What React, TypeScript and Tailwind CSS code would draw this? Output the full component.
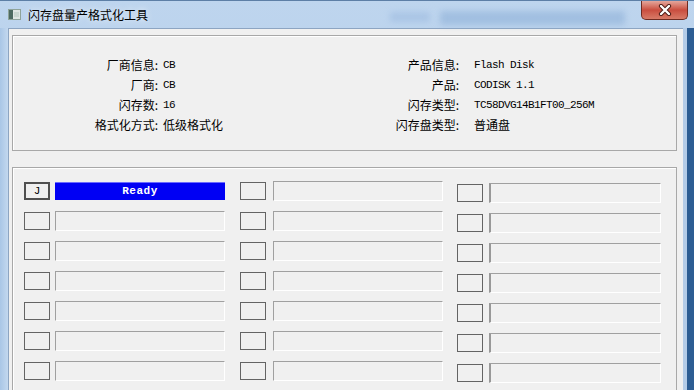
import React from "react";

const leftInfo: [string, string, boolean][] = [
  ["厂商信息:", "CB", false],
  ["厂商:", "CB", false],
  ["闪存数:", "16", false],
  ["格式化方式:", "低级格式化", true],
];
const rightInfo: [string, string, boolean][] = [
  ["产品信息:", "Flash Disk", false],
  ["产品:", "CODISK 1.1", false],
  ["闪存类型:", "TC58DVG14B1FT00_256M", false],
  ["闪存盘类型:", "普通盘", true],
];

function Value({ text, cjk }: { text: string; cjk: boolean }) {
  return cjk ? (
    <div className="h-[20px] leading-[20px] text-[12px] font-['Noto_Sans_CJK_SC',sans-serif] text-black whitespace-nowrap">
      {text}
    </div>
  ) : (
    <div className="h-[20px] leading-[20px] text-[11px] tracking-[-0.6px] font-['Liberation_Mono',monospace] text-black whitespace-nowrap">
      {text}
    </div>
  );
}

function Row({ col, idx }: { col: number; idx: number }) {
  const isReady = col === 0 && idx === 0;
  const boxW = "w-[26px]";
  return (
    <div className="flex items-center h-[20px] shrink-0">
      <div
        className={
          isReady
            ? `${boxW} h-[18px] border-2 border-[#505050] bg-[#f0f0f0] flex items-center justify-center text-[11px] font-['Liberation_Mono',monospace] text-black leading-none`
            : `${boxW} h-[18px] border border-[#646464] bg-[#f0f0f0]`
        }
      >
        {isReady ? "J" : null}
      </div>
      {isReady ? (
        <div className="ml-[5px] w-[170px] h-[18px] bg-[#0000f4] border-t border-[#6a6aff] flex items-center justify-center text-white font-bold text-[11px] tracking-[0.5px] font-['Liberation_Mono',monospace]">
          Ready
        </div>
      ) : (
        <div
          className={
            col === 2
              ? "ml-[6px] w-[172px] h-[20px] border-t border-t-[#a0a0a0] border-l-2 border-l-[#989898] border-r border-r-white border-b border-b-white bg-[#f0f0f0]"
              : col === 1
              ? "ml-[7px] w-[170px] h-[20px] border-t border-t-[#a0a0a0] border-l border-l-[#a0a0a0] border-r border-r-white border-b border-b-white bg-[#f0f0f0]"
              : "ml-[5px] w-[170px] h-[20px] border-t border-t-[#a0a0a0] border-l border-l-[#a0a0a0] border-r border-r-white border-b border-b-white bg-[#f0f0f0]"
          }
        />
      )}
    </div>
  );
}

export default function App() {
  const rows = [0, 1, 2, 3, 4, 5, 6, 7];
  return (
    <div className="w-[694px] h-[390px] overflow-hidden relative bg-gradient-to-b from-[#bed5ee] to-[#a9c6e6] flex flex-col">
      {/* title bar */}
      <div className="relative h-[28px] shrink-0 flex items-center border-t border-[#5d7fa6]">
        <div className="absolute left-[440px] top-[10px] w-[185px] h-[14px] bg-[#8fb1d8] opacity-60 blur-[3px]" />
        <div className="absolute left-[390px] top-[11px] w-[40px] h-[10px] bg-[#9dbbe0] opacity-60 blur-[3px]" />
        <svg className="ml-[8px] relative" width="13" height="11" viewBox="0 0 13 11">
          <rect x="0" y="0" width="13" height="11" fill="#8fa39a" />
          <rect x="1" y="1" width="11" height="9" fill="#dfe6e2" />
          <rect x="1" y="1" width="4" height="9" fill="#4d6a60" />
          <rect x="6" y="3" width="5" height="5" fill="#c9d6cf" />
        </svg>
        <div className="ml-[7px] relative text-[12px] leading-none text-black font-['Noto_Sans_CJK_SC',sans-serif] [text-shadow:0_0_6px_rgba(255,255,255,0.9)]">
          闪存盘量产格式化工具
        </div>
        <div className="absolute left-[641px] top-0 w-[47px] h-[19px] rounded-b-[5px] border border-t-0 border-[#6e2b22] bg-gradient-to-b from-[#e3a69c] via-[#c94d3f] to-[#d77a68] flex items-center justify-center">
          <svg width="14" height="12" viewBox="0 0 14 12">
            <path d="M3 2 L11 10 M11 2 L3 10" stroke="#4a1a14" strokeWidth="4.2" strokeLinecap="round" />
            <path d="M3 2 L11 10 M11 2 L3 10" stroke="#ffffff" strokeWidth="2.4" strokeLinecap="round" />
          </svg>
        </div>
      </div>
      {/* body */}
      <div className="flex flex-1 min-h-0">
        <div className="w-[8px] bg-gradient-to-r from-[#a9c6e6] to-[#c3d8ef]" />
        <div className="w-[675px] bg-[#f0f0f0] border-l border-t border-[#8da5c2] pl-[3px] pr-[6px] pt-[6px] flex flex-col overflow-hidden">
          {/* group 1 */}
          <div className="h-[116px] shrink-0 border border-[#a8a8a8] shadow-[inset_1px_1px_0_#ffffff] pt-[19px] flex">
            <div className="flex">
              <div className="w-[145px] flex flex-col items-end">
                {leftInfo.map(([l]) => (
                  <div key={l} className="h-[20px] leading-[20px] text-[12px] font-['Noto_Sans_CJK_SC',sans-serif] text-black whitespace-nowrap">
                    {l}
                  </div>
                ))}
              </div>
              <div className="w-[177px] pl-[5px] flex flex-col">
                {leftInfo.map(([l, v, c]) => (
                  <Value key={l} text={v} cjk={c} />
                ))}
              </div>
            </div>
            <div className="flex">
              <div className="w-[124px] flex flex-col items-end">
                {rightInfo.map(([l]) => (
                  <div key={l} className="h-[20px] leading-[20px] text-[12px] font-['Noto_Sans_CJK_SC',sans-serif] text-black whitespace-nowrap">
                    {l}
                  </div>
                ))}
              </div>
              <div className="pl-[15px] flex flex-col">
                {rightInfo.map(([l, v, c]) => (
                  <Value key={l} text={v} cjk={c} />
                ))}
              </div>
            </div>
          </div>
          {/* group 2 */}
          <div className="mt-[16px] shrink-0 h-[260px] border border-[#a8a8a8] border-b-0 shadow-[inset_1px_1px_0_#ffffff] pl-[11px] pt-[13px] flex">
            <div className="flex flex-col gap-[10px]">
              {rows.map((r) => (
                <Row key={r} col={0} idx={r} />
              ))}
            </div>
            <div className="ml-[15px] flex flex-col gap-[10px]">
              {rows.map((r) => (
                <Row key={r} col={1} idx={r} />
              ))}
            </div>
            <div className="ml-[14px] mt-[2px] flex flex-col gap-[10px]">
              {rows.map((r) => (
                <Row key={r} col={2} idx={r} />
              ))}
            </div>
          </div>
        </div>
        <div className="w-[4px] bg-[#b4cce8]" />
        <div className="w-[7px] bg-[#2d5d93]" />
      </div>
    </div>
  );
}
